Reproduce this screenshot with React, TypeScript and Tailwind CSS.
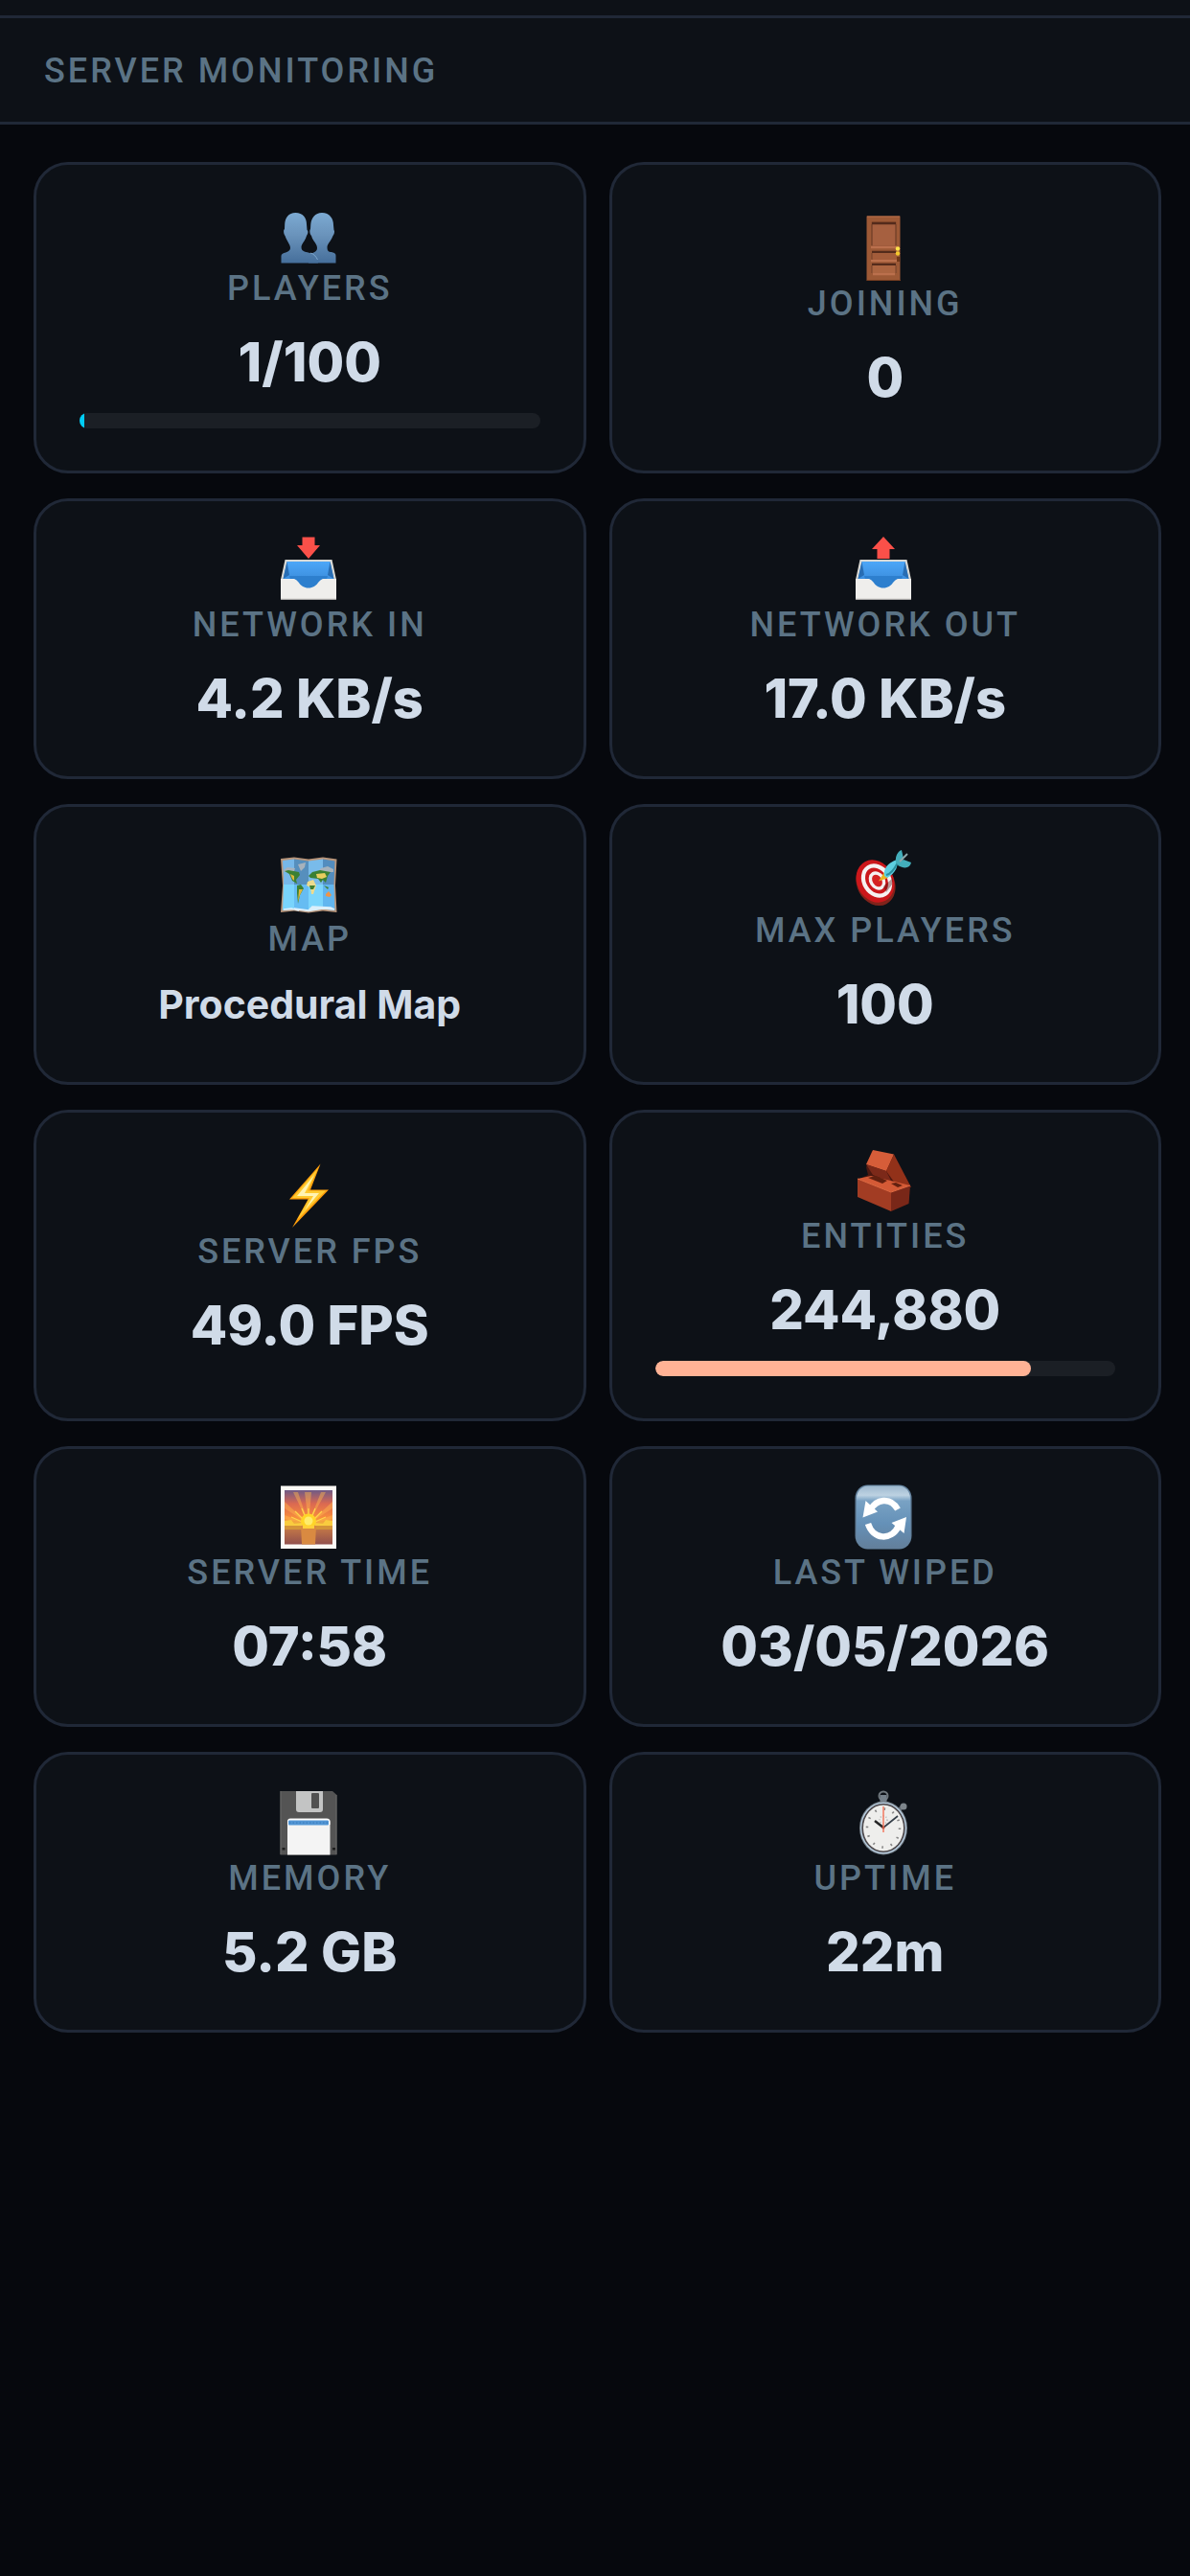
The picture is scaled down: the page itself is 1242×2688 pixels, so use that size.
import { JSX, ReactNode } from "react";

interface Stat {
  label: string;
  value: string;
  icon: JSX.Element;
  small?: boolean;
  bar?: { percent: number; color: string };
}

const Icon = ({ children }: { children: ReactNode }) => (
  <svg
    viewBox="0 0 60 68"
    className="-mt-2 mr-[3px] h-[68px] w-[60px] shrink-0"
    aria-hidden="true"
  >
    {children}
  </svg>
);

const PlayersIcon = () => (
  <Icon>
    <defs>
      <linearGradient id="bust" x1="0" y1="12" x2="0" y2="66" gradientUnits="userSpaceOnUse">
        <stop offset="0" stopColor="#7dabd3" />
        <stop offset="0.45" stopColor="#6a93bb" />
        <stop offset="1" stopColor="#456e9a" />
      </linearGradient>
    </defs>
    <path
      d="M44 13C52 13 56 19 56 26L56.500 31C57.500 32 57 35 55.500 37C54 42 49.500 45 49.500 49C49.500 53 51 54 54 54C58 55 58.500 56 58.500 58V65.500H30V58C31 55 39 55 39 50C39 45 34 42 33 37C31 35 31 31 32 30L32.300 25C33 18 37 13 44 13Z"
      fill="url(#bust)"
    />
    <path
      d="M16.500 13C24 13 28 18 28 25L28.500 31C30 32 29.500 35 28 37C27 42 22.500 45 22.500 49C22.500 54 28 54 32 55C36 56 38 59 39 62L40 65.500H1.500V58C1.500 54 11 55 11 50C11 46 7 42 5.500 37C4 35 3.500 31 5 30L5.200 25C5.700 18 9 13 16.500 13Z"
      fill="url(#bust)"
    />
    <path d="M32 55C36 56 38 59 39.500 62" fill="none" stroke="#8ab4d8" strokeWidth="0.8" />
  </Icon>
);

const DoorIcon = () => (
  <Icon>
    <rect x="12.500" y="0.500" width="35" height="67" fill="#9c5936" />
    <path d="M13 1H47" stroke="#b9714a" />
    <path d="M12.500 67.500H48" stroke="#773d20" />
    <rect x="18" y="7" width="25" height="25" fill="#a66040" stroke="#7b4328" strokeWidth="0.700" />
    <path d="M18 8H43M18 38H43M18 51H43" stroke="#542b1b" strokeWidth="2.500" />
    <path d="M17 33H44M17 47H44M19 61H42" stroke="#bb704d" strokeWidth="2.500" />
    <rect x="18" y="39" width="25" height="7" fill="#a35c3a" />
    <rect x="18" y="52" width="25" height="8" fill="#ac6541" />
    <path d="M18 9V31M18 39V46M18 52V60M43 9V31M43 52V60" stroke="#683a26" strokeWidth="0.800" />
    <path d="M45.500 43V48" stroke="#713718" strokeWidth="3" />
    <circle cx="45" cy="34.500" r="2.200" fill="#ffe24b" />
    <circle cx="45" cy="39.500" r="2.200" fill="#f4c72e" />
  </Icon>
);

const TrayIcon = ({ out }: { out?: boolean }) => (
  <Icon>
    <defs>
      <linearGradient id="tray" x1="0" y1="0" x2="0" y2="1">
        <stop offset="0" stopColor="#4da7f8" />
        <stop offset="0.650" stopColor="#3b8ddd" />
        <stop offset="1" stopColor="#2c75be" />
      </linearGradient>
    </defs>
    {out ? (
      <path d="M30 0L42 13H36.500V23H23.500V13H18Z" fill="#fb5049" />
    ) : (
      <path d="M23.500 0.500H36.500V9H42L30 23L18 9H23.500Z" fill="#fb5049" />
    )}
    <path d="M5.500 24H54.500L59 45H1Z" fill="#d8d8d4" />
    <path d="M7.500 26H52.500L56.500 44L50 56H14L3.500 44Z" fill="url(#tray)" />
    <path d="M7.500 26L10 40L3.500 44Z" fill="#286db3" />
    <path d="M52.500 26L50 40L56.500 44Z" fill="#286db3" />
    <path d="M10 41H50L45 57H15Z" fill="#2d7fce" />
    <path
      d="M1 44H14C20 44 20 53.500 30 53.500S40 44 46 44H59V65.500H1Z"
      fill="#efeeec"
    />
    <path d="M1 65H59" stroke="#d3d1cd" />
  </Icon>
);

const MapIcon = () => (
  <Icon>
    <path d="M1 8L15 6.500L30 8.500L45 6.500L59.500 8.500L58 36L59.500 64L45 62.500L30 64.500L15 62.500L1 64L3 36Z" fill="#b8967c" />
    <path d="M3 10L15 8.500V35H4L4 28Z" fill="#77b8e9" />
    <path d="M15 8.500L30 10.500V35H15Z" fill="#568fbd" />
    <path d="M30 10.500L45 8.500V35H30Z" fill="#79bbea" />
    <path d="M45 8.500L57.500 10.500L56.500 35H45Z" fill="#538dbf" />
    <path d="M4 35H15V60.500L3 62Z" fill="#79d4fc" />
    <path d="M15 35H30V62.500L15 60.500Z" fill="#66bcf2" />
    <path d="M30 35H45V60.500L30 62.500Z" fill="#7bd5fc" />
    <path d="M45 35H56.500L57.500 62L45 60.500Z" fill="#62b6ef" />
    <path d="M19 14L27 12L26 17L22 21ZM4 20L8 17L16 18L15 21L5 22ZM43 18L50 16L56 19V22L40 22Z" fill="#a7b2bc" />
    <path d="M5 21L9 20L20 22L21 25L17 30L18 34L13 31L10 24ZM30 26L34 22L42 20L53 22L50 26L48 33L45 30L43 33L40 29L32 28ZM18 36L22 35L25 39L21 46L19 55L18 44Z" fill="#3b8033" />
    <path d="M11 24L15 26L15 31L13 29ZM20 40L24 40L21 46L19 53Z" fill="#dfb83b" />
    <path d="M29 32L35 30L38 36L35 45L33 45L32 38L28 36Z" fill="#ecdb8d" />
    <path d="M38 24L47 23L49 27L44 29L39 28Z" fill="#e9cd5f" />
    <path d="M31 36H37L35 40H32ZM46 36L51 38L50 40Z" fill="#417f32" />
    <path d="M48 45L51 42L54 46L52 48L48 47Z" fill="#ef9446" />
    <path d="M4 61L12 60L20 62L15 60L30 62L34 58L53 59L57 61L45 60L30 62.500L15 60.500Z" fill="#dceffa" stroke="#dceffa" strokeWidth="1.500" />
  </Icon>
);

const TargetIcon = () => (
  <Icon>
    <ellipse cx="22" cy="43" rx="19.500" ry="24" transform="rotate(-28 22 43)" fill="#80231b" />
    <ellipse cx="21.500" cy="40.500" rx="19" ry="23" transform="rotate(-28 21.500 40.500)" fill="#cb171b" />
    <ellipse cx="23" cy="40" rx="13" ry="16.500" transform="rotate(-32 23 40)" fill="none" stroke="#f6f1f1" strokeWidth="4.200" />
    <ellipse cx="23.500" cy="40" rx="6.500" ry="8.500" transform="rotate(-32 23.500 40)" fill="#d52222" stroke="#f6f1f1" strokeWidth="3.400" />
    <path d="M30 46L40 37L39 44L33 52Z" fill="#55120f" opacity="0.400" />
    <path d="M25 40.500L31 31L35 37Z" fill="#eab420" />
    <path d="M31 35C30 27 34 22 44 18C46 24 43 32 34 37Z" fill="#5dcfe1" />
    <path d="M33 34C38 33 42 27 45 21" fill="none" stroke="#2b8f9e" strokeWidth="2" />
    <path d="M43 21C42 13 46 9 49 8L51 17L46 24ZM46 21L51 18L59 21C58 27 52 28 45 24Z" fill="#43aebb" />
    <path d="M47 20L55 12" stroke="#8ca8ad" strokeWidth="2" />
  </Icon>
);

const BoltIcon = () => (
  <Icon>
    <path d="M42.500 0.500L10 37.500H29.500L13 67L51 27.500H32Z" fill="#ff9e0b" />
    <path d="M40 5L13 36H31L18 59L48 28.500H29.500Z" fill="#ffcb31" />
    <path d="M36 12L18 34H35L26 49L41 31H26Z" fill="#fff4b4" />
  </Icon>
);

const BricksIcon = () => (
  <Icon>
    <path d="M18 3L39 7L57 38L57 54L40 65L3 50V33L14 28L12 20Z" fill="#4b1810" />
    <path d="M19 2L41 6.500L33 24L12 17Z" fill="#d65d39" />
    <path d="M41 6.500L59 41L43 38L33 24Z" fill="#923119" />
    <path d="M12 17L33 24L39 36L19 28Z" fill="#7c2919" />
    <path d="M3 32L17 29L58 39L38 46Z" fill="#d45a36" />
    <path d="M3 32L38 46V66L3 51Z" fill="#a23c23" />
    <path d="M38 46L58 39L56.500 58L38 66Z" fill="#792718" />
    <path d="M14 31L22 29L34 34L29 37ZM38 37L43 36L50 39L45 41Z" fill="#62200f" />
    <path d="M3 32L38 46L58 39" fill="none" stroke="#e06b43" />
  </Icon>
);

const SunriseIcon = () => (
  <Icon>
    <defs>
      <linearGradient id="sky" x1="0" y1="0" x2="0" y2="1">
        <stop offset="0" stopColor="#6e5a86" />
        <stop offset="0.250" stopColor="#db6951" />
        <stop offset="0.500" stopColor="#f78b3d" />
        <stop offset="0.680" stopColor="#ecc33e" />
        <stop offset="0.720" stopColor="#c07547" />
        <stop offset="1" stopColor="#92504d" />
      </linearGradient>
    </defs>
    <rect x="1" y="1.500" width="58" height="65.500" fill="#fbf9f5" />
    <rect x="5" y="6" width="50" height="56.500" fill="url(#sky)" />
    <path
      d="M30 41L26 8H33ZM30 41L14 8H19ZM30 41L43 8H48ZM30 41L5 18V25ZM30 41L55 18V25ZM30 41L5 32V36ZM30 41L55 32V36Z"
      fill="#ffb94d"
      opacity="0.450"
    />
    <path
      d="M30 42V25M30 42L23 25M30 42L37 25M30 42L16 28M30 42L44 28M30 42L12 34M30 42L48 34"
      stroke="#ffd64c"
      strokeWidth="1.300"
    />
    <path d="M5 38L12 37L15 41L23 40V44H5ZM55 38L48 37L45 41L37 40V44H55Z" fill="#f9cc3f" />
    <ellipse cx="30" cy="38" rx="8" ry="7.500" fill="#ffd528" />
    <ellipse cx="30" cy="38" rx="4.500" ry="4.500" fill="#ffec6c" />
    <path d="M5 43H55V47H5Z" fill="#d49439" />
    <path d="M22 43H38L37 62.500H23Z" fill="#d98a41" />
    <path d="M24 43H36V46H24Z" fill="#ffd13a" />
  </Icon>
);

const RefreshIcon = () => (
  <Icon>
    <defs>
      <linearGradient id="key" x1="0" y1="0" x2="0" y2="1">
        <stop offset="0" stopColor="#9db8ce" />
        <stop offset="0.150" stopColor="#bdd2e2" />
        <stop offset="0.240" stopColor="#79a2c4" />
        <stop offset="0.600" stopColor="#6591b8" />
        <stop offset="1" stopColor="#637f9b" />
      </linearGradient>
    </defs>
    <rect x="0.500" y="0.500" width="59" height="67" rx="13" ry="14" fill="#63829e" />
    <rect x="2" y="1.500" width="56" height="65" rx="12" ry="13" fill="url(#key)" />
    <path d="M17 26C22 16 37 12 45 26" fill="none" stroke="#fff" strokeWidth="6.500" />
    <path d="M14 41C19 57 38 60 46 43" fill="none" stroke="#fff" strokeWidth="6.500" />
    <path d="M11.500 17L24 28.500L8.500 34.500ZM54 34L51.500 51L38.500 40Z" fill="#fff" />
  </Icon>
);

const FloppyIcon = () => (
  <Icon>
    <path d="M0.500 1H55L59.500 5V67.500H0.500Z" fill="#545454" />
    <path d="M1 1V67M59 5V67" stroke="#696969" />
    <path d="M17 1H45V20Q45 23 42 23H20Q17 23 17 20Z" fill="#c3c4c4" />
    <rect x="33" y="3" width="8" height="16" rx="1" fill="#515151" />
    <path d="M8 33Q8 29.500 11 29.500H49Q52.500 29.500 52.500 33V67.500H8Z" fill="#f4f4f4" />
    <path d="M8 36V33Q8 30 11 30H49Q52.500 30 52.500 33V36Z" fill="#fff" />
    <rect x="9" y="31.500" width="42" height="5" rx="1" fill="#5396d5" />
    <path d="M10 34H50" stroke="#3979b7" strokeDasharray="1.500 2" />
    <path d="M2.500 60H5.500V62.500H2.500ZM55 60H58V62.500H55Z" fill="#1e1e1e" />
  </Icon>
);

const StopwatchIcon = () => (
  <Icon>
    <circle cx="30" cy="6" r="4.500" fill="none" stroke="#6f777d" strokeWidth="2" />
    <rect x="26.500" y="5" width="7" height="8" fill="#75808a" />
    <path d="M45 22L50 17" stroke="#59616a" strokeWidth="4" />
    <circle cx="51" cy="17" r="3.500" fill="#7d858b" />
    <ellipse cx="30" cy="39.500" rx="25" ry="28" fill="#7b858e" />
    <ellipse cx="30" cy="39.500" rx="23.300" ry="26.200" fill="#4a4548" stroke="#b8cee1" strokeWidth="1.300" />
    <ellipse cx="30" cy="39.500" rx="21" ry="24" fill="#eeeeec" />
    <ellipse
      cx="30"
      cy="39.500"
      rx="17"
      ry="20"
      fill="none"
      stroke="#858585"
      strokeWidth="2.500"
      strokeDasharray="1.600 8.100"
    />
    <circle cx="30" cy="31" r="4" fill="none" stroke="#b4b4b4" strokeWidth="1.500" strokeDasharray="1 2" />
    <path d="M30 39L21 32" stroke="#252525" strokeWidth="2.500" />
    <path d="M30 39L45 27" stroke="#353f49" strokeWidth="1.700" />
    <path d="M30 17V44" stroke="#f27a62" strokeWidth="1.500" />
    <circle cx="30" cy="39" r="1.500" fill="#c25743" />
  </Icon>
);

const stats: Stat[] = [
  {
    label: "PLAYERS",
    value: "1/100",
    icon: <PlayersIcon />,
    bar: { percent: 1, color: "bg-[#00cdf5]" },
  },
  { label: "JOINING", value: "0", icon: <DoorIcon /> },
  { label: "NETWORK IN", value: "4.2 KB/s", icon: <TrayIcon /> },
  { label: "NETWORK OUT", value: "17.0 KB/s", icon: <TrayIcon out /> },
  { label: "MAP", value: "Procedural Map", icon: <MapIcon />, small: true },
  { label: "MAX PLAYERS", value: "100", icon: <TargetIcon /> },
  { label: "SERVER FPS", value: "49.0 FPS", icon: <BoltIcon /> },
  {
    label: "ENTITIES",
    value: "244,880",
    icon: <BricksIcon />,
    bar: { percent: (244880 / 300000) * 100, color: "rounded-lg bg-[#ffb295]" },
  },
  { label: "SERVER TIME", value: "07:58", icon: <SunriseIcon /> },
  { label: "LAST WIPED", value: "03/05/2026", icon: <RefreshIcon /> },
  { label: "MEMORY", value: "5.2 GB", icon: <FloppyIcon /> },
  { label: "UPTIME", value: "22m", icon: <StopwatchIcon /> },
];

const StatCard = ({ label, value, icon, small, bar }: Stat) => (
  <div className="flex flex-col items-center justify-center rounded-[36px] border-3 border-[#202837] bg-[#0d1117] px-[45px] pt-[45px] pb-11 text-center">
    {icon}
    <h3 className="font-['Roboto',sans-serif] text-[36px] leading-[48px] font-medium tracking-[3px] whitespace-nowrap text-[#5b7385]">
      {label}
    </h3>
    <p
      className={
        small
          ? "mt-4 text-[41px] leading-[56px] font-bold whitespace-nowrap text-[#d0dbe8]"
          : "mt-4 text-[56px] leading-[74px] font-extrabold whitespace-nowrap text-[#d0dbe8]"
      }
    >
      {value}
    </p>
    {bar && (
      <div
        role="progressbar"
        aria-label={label}
        aria-valuenow={Math.round(bar.percent)}
        className="mt-4 h-4 w-full overflow-hidden rounded-lg bg-[#1b1f25]"
      >
        <div className={`h-full ${bar.color}`} style={{ width: `${bar.percent}%` }} />
      </div>
    )}
  </div>
);

const App = (): JSX.Element => {
  return (
    <main className="min-h-screen bg-[#06080d] font-['Inter',sans-serif]">
      <div className="h-[19px] border-b-3 border-[#202837] bg-[#0d1117]" />
      <header className="border-b-3 border-[#202837] bg-[#0d1117] px-[46px] pt-[31px] pb-[29px]">
        <h2 className="font-['Roboto',sans-serif] text-[36px] leading-[48px] font-medium tracking-[3px] text-[#5b7385]">
          SERVER MONITORING
        </h2>
      </header>

      <section className="grid grid-cols-2 gap-x-6 gap-y-[26px] pt-[39px] pr-[30px] pb-10 pl-[35px]">
        {stats.map((stat) => (
          <StatCard key={stat.label} {...stat} />
        ))}
      </section>
    </main>
  );
};

export default App;
